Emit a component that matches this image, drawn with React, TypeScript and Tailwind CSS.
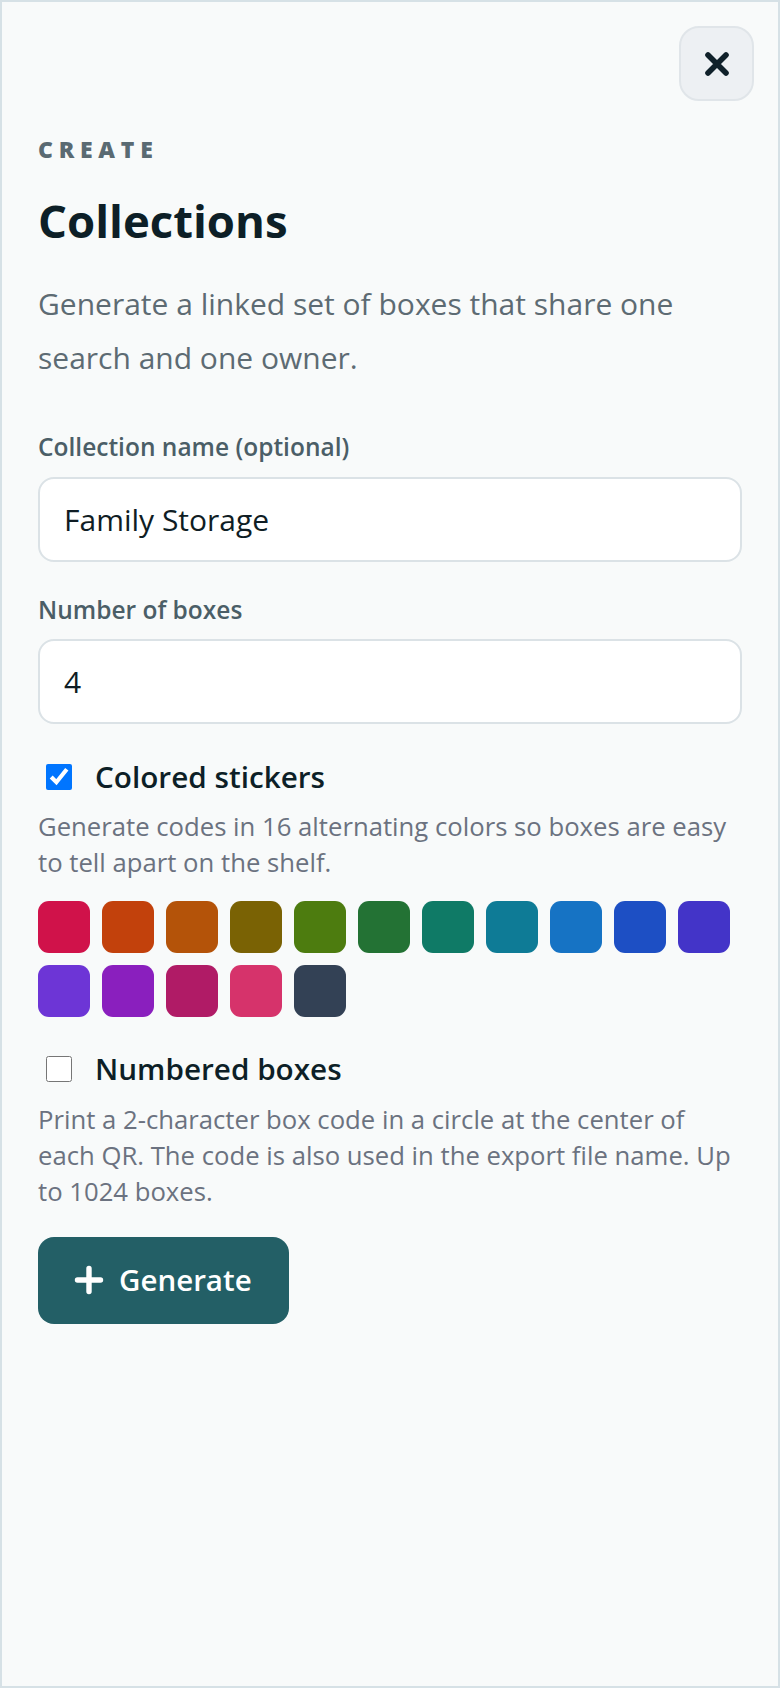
import React from "react";

const swatches = [
  "#d0124a",
  "#c2410c",
  "#b45309",
  "#7a6204",
  "#4d7c0f",
  "#237234",
  "#0f7a66",
  "#0e7b96",
  "#1673c4",
  "#1d4fc4",
  "#4334c8",
  "#6d35d6",
  "#8a1fbe",
  "#b01b66",
  "#d6336b",
  "#334155",
];

function XIcon() {
  return (
    <svg width="28" height="28" viewBox="0 0 28 28" fill="none" aria-hidden="true">
      <path d="M5 5 L23 23 M23 5 L5 23" stroke="#10212a" strokeWidth="5.6" strokeLinecap="round" />
    </svg>
  );
}

function PlusIcon() {
  return (
    <svg width="30" height="30" viewBox="0 0 30 30" fill="none" aria-hidden="true">
      <path d="M15 3.5 V26.5 M3.5 15 H26.5" stroke="#ffffff" strokeWidth="5.4" strokeLinecap="round" />
    </svg>
  );
}

export default function App() {
  return (
    <div className="relative h-[1688px] w-full overflow-hidden border-2 border-[#d6e1e6] bg-[#f8fafa] px-[36px] pt-[132px] font-['Open_Sans',sans-serif]">
      <button
        type="button"
        className="absolute right-[24px] top-[24px] flex h-[75px] w-[75px] items-center justify-center rounded-[20px] border-2 border-[#e0e5e9] bg-[#edf0f3]"
        aria-label="Close"
      >
        <XIcon />
      </button>

      <div className="text-[23px] font-extrabold uppercase leading-[30px] tracking-[0.25em] text-[#5a6a72]">Create</div>

      <h1 className="mt-[28px] text-[45.5px] font-bold leading-[56px] text-[#0d1f27]">Collections</h1>

      <p className="mt-[29px] text-[30px] leading-[54px] text-[#5d6b73]">
        <span className="block whitespace-nowrap">Generate a linked set of boxes that share one</span>
        <span className="block whitespace-nowrap">search and one owner.</span>
      </p>

      <label className="mt-[46px] block text-[24.5px] font-semibold leading-[32px] text-[#4b5e67]">
        Collection name (optional)
      </label>
      <input
        type="text"
        defaultValue="Family Storage"
        className="mt-[13.5px] block h-[85px] w-full rounded-[16px] border-2 border-[#dbe2e6] bg-white px-[24px] text-[30px] text-[#0f1d24] outline-none"
      />

      <label className="mt-[32px] block text-[24.5px] font-semibold leading-[32px] text-[#4b5e67]">
        Number of boxes
      </label>
      <input
        type="text"
        defaultValue="4"
        className="mt-[13.5px] block h-[85px] w-full rounded-[16px] border-2 border-[#dbe2e6] bg-white px-[24px] text-[30px] text-[#0f1d24] outline-none"
      />

      <label className="mt-[35px] flex h-[36px] items-center">
        <input type="checkbox" defaultChecked className="ml-[8px] mr-[23px] h-[26px] w-[26px] shrink-0" />
        <span className="text-[29.7px] font-semibold leading-[36px] text-[#0d1f27]">Colored stickers</span>
      </label>
      <p className="mt-[14.4px] text-[25.7px] leading-[36px] text-[#6b7280]">
        <span className="block whitespace-nowrap">Generate codes in 16 alternating colors so boxes are easy</span>
        <span className="block whitespace-nowrap">to tell apart on the shelf.</span>
      </p>

      <div className="mt-[19.3px] flex flex-wrap gap-[12px]">
        {swatches.map((c) => (
          <div key={c} className="h-[52px] w-[52px] rounded-[11px]" style={{ backgroundColor: c }} />
        ))}
      </div>

      <label className="mt-[34.6px] flex h-[36px] items-center">
        <input type="checkbox" className="ml-[8px] mr-[23px] h-[26px] w-[26px] shrink-0" />
        <span className="text-[29.7px] font-semibold leading-[36px] text-[#0d1f27]">Numbered boxes</span>
      </label>
      <p className="mt-[14.4px] text-[25.7px] leading-[36px] text-[#6b7280]">
        <span className="block whitespace-nowrap">Print a 2-character box code in a circle at the center of</span>
        <span className="block whitespace-nowrap">each QR. The code is also used in the export file name. Up</span>
        <span className="block whitespace-nowrap">to 1024 boxes.</span>
      </p>

      <button
        type="button"
        className="mt-[27px] flex h-[87px] w-[251px] items-center gap-[15px] rounded-[16px] bg-[#235f66] pl-[36px] text-[29.5px] font-semibold text-white"
      >
        <PlusIcon />
        <span>Generate</span>
      </button>
    </div>
  );
}
